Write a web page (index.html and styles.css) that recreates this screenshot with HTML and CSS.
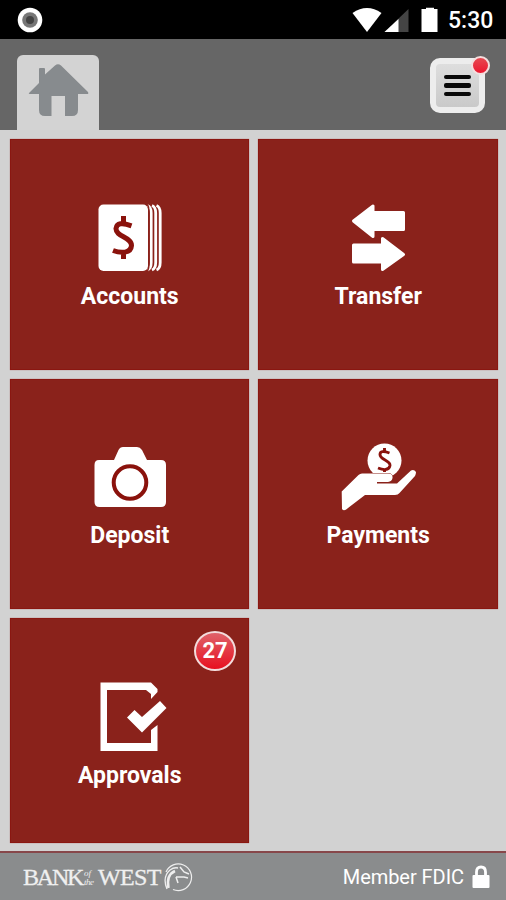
FILE: index.html
```html
<!DOCTYPE html>
<html lang="en">

<head>
    <meta charset="UTF-8">
    <meta name="viewport" content="width=device-width, initial-scale=1.0">
    <title>Bank of the West</title>
    <link rel="stylesheet" href="styles.css">
</head>

<body>
    <div class="status-bar">
        <svg class="record" width="26" height="26" viewBox="0 0 26 26">
            <circle cx="13" cy="13" r="12.3" fill="#fff" />
            <circle cx="13" cy="13" r="7.8" fill="#777" />
            <circle cx="13" cy="13" r="4" fill="#444" />
        </svg>
        <svg class="signals" width="90" height="28" viewBox="0 0 90 28">
            <path d="M1.5 7Q16 -3 30.500 7L16 26Z" fill="#fff" />
            <path d="M57.500 3V26H33.500Z" fill="#444" />
            <path d="M47.500 13V26H33.500Z" fill="#fff" />
            <path d="M75 3V1.800h8V3h3.500V26h-16V3Z" fill="#fff" />
        </svg>
        <span class="clock">5:30</span>
    </div>

    <header class="header">
        <a class="home-tab">
            <svg width="62" height="54" viewBox="0 0 62 54">
                <path d="M2 30L12 20V6q0-1 1-1h4q1 0 1 1V11.500L28 2.500Q31 0 34 2.500L61 29Q62 31 60 31H51V47Q51 53 45 53H38V33H24.500V53H18Q12 53 12 47V31H3Q1 31 2 30Z" fill="#878b8e" />
            </svg>
        </a>
        <button class="menu-button">
            <span class="menu-line"></span>
            <span class="menu-line"></span>
            <span class="menu-line"></span>
            <span class="dot"></span>
        </button>
    </header>

    <main class="tiles">
        <a class="tile">
            <svg class="icon" viewBox="0 0 80 70">
                <rect x="9.500" y="1.500" width="49.500" height="66.500" rx="5" fill="#fff" />
                <path d="M58.500 2.500Q62.200 4 62.200 10V59.500Q62.200 65.500 58.500 67M63 2.500Q66.700 4 66.700 10V59.500Q66.700 65.500 63 67M67.500 2.500Q71.200 4 71.200 10V59.500Q71.200 65.500 67.500 67" fill="none" stroke="#fff" stroke-width="2.800" />
                <path d="M58.500 1.500Q60 4 60 9V60.500Q60 65.500 58.500 68" fill="none" stroke="#8a221b" stroke-width="1.500" />
                <path d="M42.500 22.800Q28 17.500 27 25.500C26.500 33.500 42.500 34 42.500 42.500C42 50.500 32 50.500 24 47.500M34.500 13V21.500M34.500 48V56" fill="none" stroke="#8a120c" stroke-width="5" />
            </svg>
            <span class="label">Accounts</span>
        </a>
        <a class="tile">
            <svg class="icon" viewBox="0 0 80 70">
                <g fill="#fff" stroke="#fff" stroke-width="3" stroke-linejoin="round">
                    <path d="M15.500 18L35 3V9.500H65.500V26.500H35V33.500Z" />
                    <path d="M65.500 51.500L44.500 35.500V42H15.500V59H44.500V66.500Z" />
                </g>
            </svg>
            <span class="label">Transfer</span>
        </a>
        <a class="tile">
            <svg class="icon" viewBox="0 0 80 70">
                <path d="M10 18H25L29.500 8Q31 5 34 5H48Q51 5 53 8L58 18H72Q77 18 77 23V60Q77 65 72 65H10.500Q5.500 65 5.500 60V23Q5.500 18 10 18Z" fill="#fff" />
                <circle cx="41" cy="40.500" r="16.300" fill="none" stroke="#8a120c" stroke-width="4" />
            </svg>
            <span class="label">Deposit</span>
        </a>
        <a class="tile">
            <svg class="icon" viewBox="0 0 80 70">
                <circle cx="46.500" cy="18.500" r="17" fill="#fff" />
                <path d="M51.500 11Q42 7.500 42 12.500C42 18 52.500 18 52 23.500C51 29 45 28 40 26M46.500 6V10M46.500 27V30" fill="none" stroke="#8a120c" stroke-width="2.900" />
                <path d="M3.700 49.500L20.500 33Q22 31.500 24 31.500H50Q55 31.500 54.500 36Q54 39.500 50 40H39V41.500H59L73 28.500Q76 27 78 30Q78 32 77 34L61.500 51Q60 53 57 53H27L10 66Q6 70 4 67Z" fill="#fff" stroke="#8a221b" stroke-width="1" paint-order="stroke" />
            </svg>
            <span class="label">Payments</span>
        </a>
        <a class="tile">
            <span class="badge">27</span>
            <svg class="icon" viewBox="0 0 80 70">
                <path d="M11.500 .5H62L68.500 7V10L62 17V12L57 8H18V61H62V48L68.500 43V69H11.500Z" fill="#fff" />
                <path d="M38 35.500L45.500 28L53 35L71 19L77.500 26L53 50.500Z" fill="#fff" />
            </svg>
            <span class="label">Approvals</span>
        </a>
    </main>

    <footer class="footer">
        <div class="brand">
            <span class="brand-name">BANK</span>
            <span class="brand-small"><i>of</i><i class="the">the</i></span>
            <span class="brand-name west">WEST</span>
            <svg width="30" height="30" viewBox="0 0 30 30" fill="none" stroke="#eee">
                <path d="M3 10A13.300 13.300 0 1 1 10 27.500" stroke-width="1.200" />
                <path d="M4 27Q-1 15 7 8Q11 5 15 6" stroke-width="1.300" />
                <path d="M5.500 26Q3 13 12 9" stroke-width="2.500" />
                <path d="M17 5L21 10L26 12M13 15H21L25 16M13 15L15 21" stroke-width="1.500" />
            </svg>
        </div>
        <div class="member">
            <span>Member FDIC</span>
            <svg width="18" height="24" viewBox="0 0 18 24">
                <path d="M4.500 11V7Q4.500 2 9 2T13.500 7V11" fill="none" stroke="#fff" stroke-width="2.800" />
                <rect x=".5" y="10" width="17" height="13" rx="1" fill="#fff" />
            </svg>
        </div>
    </footer>
</body>

</html>
```
FILE: styles.css
```css
* {
    box-sizing: border-box;
}

body {
    margin: 0;
    height: 900px;
    display: flex;
    flex-direction: column;
    background-color: #d2d2d2;
    font-family: Roboto, "Liberation Sans", sans-serif;
    color: #fff;
    overflow: hidden;
}

svg {
    display: block;
}

.status-bar {
    height: 39px;
    flex: none;
    display: flex;
    align-items: center;
    padding: 1px 13px 0 17px;
    background-color: #000;
}

.signals {
    margin-left: auto;
}

.clock {
    width: 45px;
    margin-left: 7px;
    padding-top: 2px;
    font-size: 23px;
    font-weight: 500;
    line-height: 28px;
    white-space: nowrap;
}

.header {
    height: 91px;
    flex: none;
    display: flex;
    justify-content: space-between;
    padding: 16px 21px 0 17px;
    background-color: #666;
}

.home-tab {
    width: 82px;
    padding: 8px 10px 0;
    border-radius: 6px 6px 0 0;
    background-color: #d3d3d3;
}

.menu-button {
    position: relative;
    width: 55px;
    height: 55px;
    margin-top: 3px;
    padding: 0;
    display: flex;
    flex-direction: column;
    align-items: center;
    justify-content: center;
    gap: 4px;
    border: 6px solid #ededed;
    border-radius: 10px;
    background: linear-gradient(#dedede, #c9c9c9);
}

.menu-line {
    width: 27px;
    height: 4.500px;
    border-radius: 2px;
    background-color: #080808;
}

.dot {
    position: absolute;
    top: -8px;
    right: -11px;
    width: 19px;
    height: 19px;
    border: 2px solid #f4dede;
    border-radius: 50%;
    background: linear-gradient(#e64850, #ed1830);
}

.tiles {
    flex: 1;
    display: grid;
    grid-template-columns: 1fr 1fr;
    grid-template-rows: 230.500px 230.500px 225px;
    gap: 9px;
    padding: 9px 8.500px 0 9.500px;
}

.tile {
    position: relative;
    display: flex;
    flex-direction: column;
    align-items: center;
    padding-top: 63.500px;
    background-color: #8a221b;
    box-shadow: inset 0 0 0 1px #8a1711, 0 0 1px #a66;
}

.icon {
    width: 80px;
    height: 70px;
}

.label {
    margin-top: 10px;
    padding-left: 1px;
    font-size: 23px;
    font-weight: 700;
    line-height: 28px;
}

.badge {
    position: absolute;
    top: 12.500px;
    right: 13px;
    width: 42px;
    height: 40px;
    border: 2px solid #f3dcdc;
    border-radius: 50%;
    background: linear-gradient(#df626a, #e8101f);
    font-size: 22px;
    font-weight: 700;
    line-height: 36px;
    text-align: center;
}

.footer {
    height: 49px;
    flex: none;
    display: flex;
    align-items: center;
    justify-content: space-between;
    padding: 1px 16px 0 23px;
    border-top: 2px solid #87474a;
    background-color: #8a8c8d;
}

.brand {
    display: flex;
    align-items: center;
    color: #f0f0f0;
}

.brand-name {
    width: 61px;
    font-family: "Liberation Serif", serif;
    font-size: 24px;
    letter-spacing: -2.200px;
    line-height: 28px;
    -webkit-text-stroke: 0.3px #f0f0f0;
}

.west {
    width: 65px;
    letter-spacing: -0.600px;
}

.brand-small {
    width: 14px;
    display: flex;
    flex-direction: column;
    font-family: "Liberation Serif", serif;
    font-size: 9px;
    line-height: 10px;
    margin: -2px 0;
}

.the {
    letter-spacing: -0.500px;
    margin-top: -1px;
}

.member {
    display: flex;
    align-items: center;
    gap: 8px;
    font-size: 20px;
    letter-spacing: -0.050px;
}
```
